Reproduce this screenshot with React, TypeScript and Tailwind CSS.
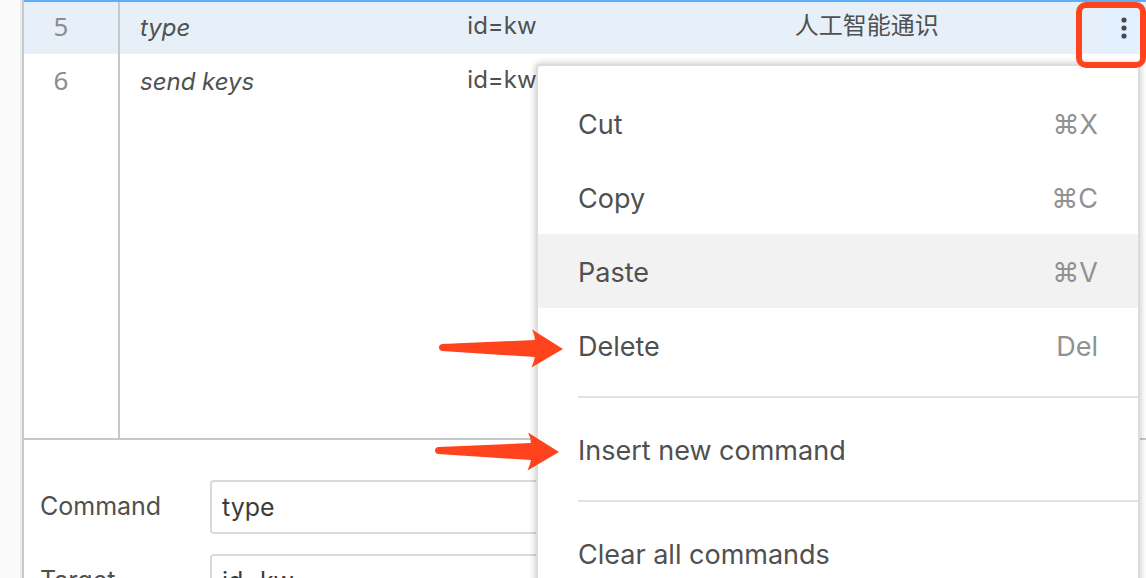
import React from "react";

type Command = { index: number; command: string; target: string; value: string };
type MenuEntry = { label: string; shortcut?: string };

const commands: Command[] = [
  { index: 5, command: "type", target: "id=kw", value: "人工智能通识" },
  { index: 6, command: "send keys", target: "id=kw", value: "" },
];

const menuGroups: MenuEntry[][] = [
  [
    { label: "Cut", shortcut: "⌘X" },
    { label: "Copy", shortcut: "⌘C" },
    { label: "Paste", shortcut: "⌘V" },
    { label: "Delete", shortcut: "Del" },
  ],
  [{ label: "Insert new command" }],
  [{ label: "Clear all commands" }],
];

function CommandTable() {
  return (
    <table className="w-full table-fixed border-separate border-spacing-0 text-left text-[24px] leading-[30px] text-[#505050]">
      <colgroup>
        <col className="w-24" />
        <col />
        <col />
        <col />
        <col className="w-11" />
      </colgroup>
      <tbody>
        {commands.map((row) => {
          const selected = row.index === 5;
          return (
            <tr key={row.index} className={selected ? "h-[52px] bg-[#e7f0f8]" : "h-14"}>
              <td className="border-r-2 border-[#c8c8c8] p-0 pr-5 pb-1 text-center font-['Noto_Sans'] text-[26px] text-[#8c8c8c]">
                {row.index}
              </td>
              <td className="p-0 pl-5 italic">{row.command}</td>
              <td className="p-0 pb-1 pl-5">{row.target}</td>
              <td className="p-0 pb-1 pl-5">{row.value}</td>
              <td className={selected ? "bg-[#e2f0ff] p-0" : "p-0"}>
                {selected && (
                  <button type="button" aria-label="Command options" className="flex h-[52px] w-full items-center justify-center">
                    <svg width="6" height="22" viewBox="0 0 6 22" fill="#4a4a4a" aria-hidden="true">
                      <circle cx="3" cy="3" r="2.6" />
                      <circle cx="3" cy="11" r="2.6" />
                      <circle cx="3" cy="19" r="2.6" />
                    </svg>
                  </button>
                )}
              </td>
            </tr>
          );
        })}
        <tr className="h-[328px]">
          <td className="border-r-2 border-[#c8c8c8] p-0" />
          <td colSpan={4} className="p-0" />
        </tr>
      </tbody>
    </table>
  );
}

function Field({ id, label, value }: { id: string; label: string; value: string }) {
  return (
    <div className="flex items-center">
      <label htmlFor={id} className="w-[170px] shrink-0">
        {label}
      </label>
      <input
        id={id}
        defaultValue={value}
        className="h-[54px] min-w-0 flex-1 rounded-[4px] border-2 border-[#dadada] bg-white px-2.5 text-[#3c3c3c] outline-none"
      />
    </div>
  );
}

function ContextMenu() {
  return (
    <div
      role="menu"
      className="absolute top-[66px] right-2 left-[538px] z-10 rounded-[2px] bg-white py-5 shadow-[0_0_0_2px_#dcdcdc,0_0_6px_3px_rgba(0,0,0,0.2)]"
    >
      {menuGroups.map((group, i) => (
        <div key={i} role="group">
          {i > 0 && <hr className="my-3.5 ml-10 border-t-2 border-[#e3e3e3]" />}
          {group.map((entry) => (
            <button
              key={entry.label}
              type="button"
              role="menuitem"
              className={
                entry.label === "Paste"
                  ? "flex h-[74px] w-full items-center justify-between bg-[#f2f2f2] px-10 pt-1"
                  : "flex h-[74px] w-full items-center justify-between px-10 pt-1"
              }
            >
              <span>{entry.label}</span>
              {entry.shortcut && <span className="text-[#919191]">{entry.shortcut}</span>}
            </button>
          ))}
        </div>
      ))}
    </div>
  );
}

function Arrow({ className }: { className: string }) {
  return (
    <svg className={className} width="126" height="40" viewBox="0 0 126 40" fill="#ff431c" aria-hidden="true">
      <path d="M4 15 L97 11 Q97 6 94 0.5 L125 20 L93.500 38.500 Q96 33 97 28 L4 22 Q1 21 1 18.500 Q1 15.500 4 15 Z" />
    </svg>
  );
}

export default function App() {
  return (
    <div className="relative flex h-screen overflow-hidden bg-white font-[Inter,'Noto_Sans_CJK_SC',sans-serif] text-[27px] text-[#505050]">
      <div className="w-[22px] shrink-0 border-r-2 border-[#ececec] bg-[#fafafa]" />
      <main className="min-w-0 flex-1 border-l-2 border-[#c8c8c8]">
        <section className="border-t-2 border-b-2 border-t-[#5cb0fb] border-b-[#c8c8c8]">
          <CommandTable />
        </section>
        <form className="flex flex-col gap-5 px-4 pt-10 text-[25px]">
          <Field id="command" label="Command" value="type" />
          <Field id="target" label="Target" value="id=kw" />
        </form>
      </main>
      <ContextMenu />
      <div className="absolute top-0.5 right-0 z-20 h-[66px] w-[70px] rounded-[10px] border-6 border-[#ff431c]" />
      <Arrow className="absolute top-[329px] left-[438px] z-20" />
      <Arrow className="absolute top-[432px] left-[434px] z-20" />
    </div>
  );
}
